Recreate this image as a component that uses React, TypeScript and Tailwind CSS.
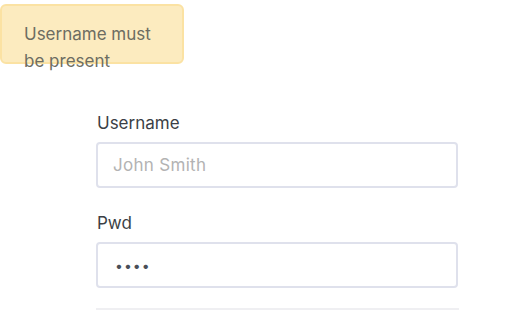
import React from "react";

export default function App() {
  return (
    <div
      className="relative w-[516px] h-[310px] overflow-hidden bg-white"
      style={{ fontFamily: "Inter, 'Noto Sans', sans-serif" }}
    >
      <div className="absolute left-0 top-[4px] w-[184px] h-[60px] rounded-[6px] border-2 border-[#fbe2a3] bg-[#fcebbf] pl-[22px] pt-[15px] text-[17px] leading-[27px] text-[#6d6d62]">
        Username must
        <br />
        be present
      </div>
      <div className="pt-[111px] pl-[96px] w-[459px]">
        <label className="block text-[17px] leading-[24px] text-[#3b3f46] pl-[1px]">Username</label>
        <input
          className="mt-[7px] block w-[362px] h-[46px] rounded-[4px] border-2 border-[#dfe1ec] bg-white pl-[15px] pr-[16px] text-[17px] tracking-[0.3px] text-[#3b3f46] placeholder:text-[#b3b3b3] outline-none"
          placeholder="John Smith"
        />
        <label className="mt-[23px] block text-[17px] leading-[24px] text-[#3b3f46] pl-[1px]">Pwd</label>
        <input
          type="password"
          defaultValue="abcd"
          className="mt-[7px] block w-[362px] h-[46px] rounded-[4px] border-2 border-[#dfe1ec] bg-white pl-[17px] pr-[16px] text-[14px] tracking-[1px] text-[#4a4f58] outline-none"
        />
        <div className="mt-[20px] h-[2px] w-[363px] bg-[#efeff2]" />
      </div>
    </div>
  );
}
